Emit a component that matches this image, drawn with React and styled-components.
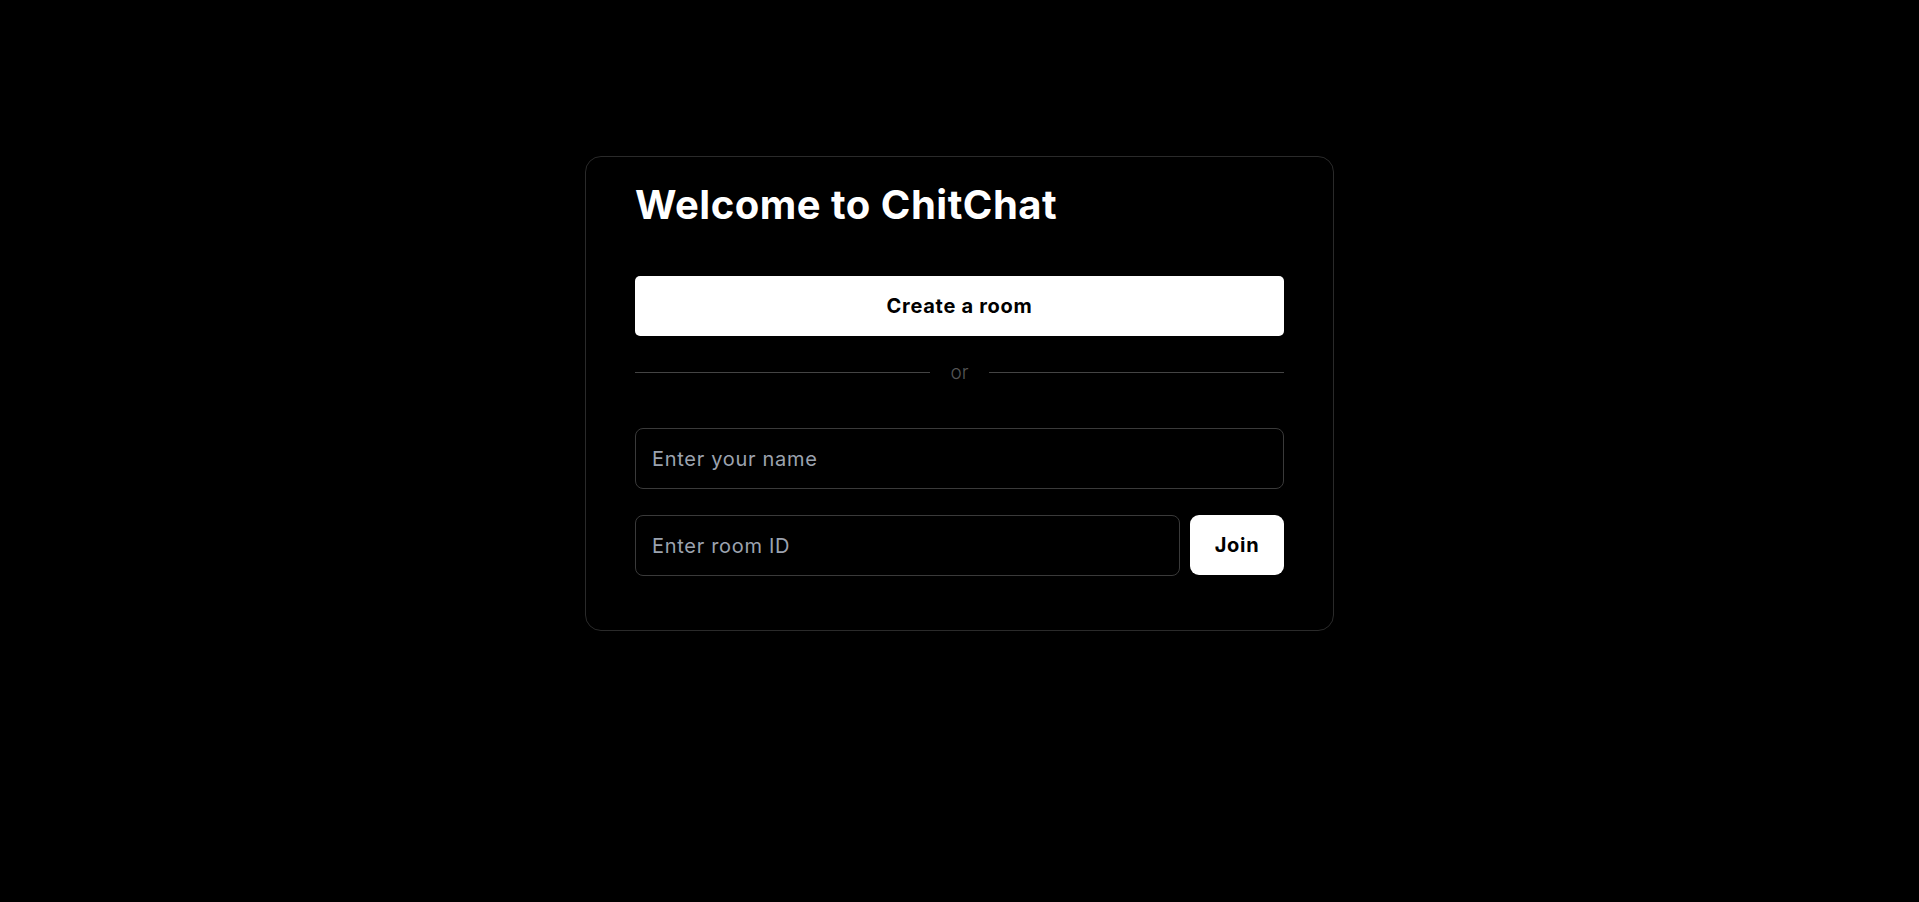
import React from 'react'
import styled, { createGlobalStyle } from 'styled-components'

const GlobalStyle = createGlobalStyle`
    html, body {
        margin: 0;
        background-color: #000;
        font-family: Inter, "Noto Sans", sans-serif;
    }
`

const Page = styled.div`
    min-height: 100vh;
    display: flex;
    justify-content: center;
    align-items: flex-start;
    padding-top: 156px;
    box-sizing: border-box;
`

const Card = styled.div`
    width: 749px;
    box-sizing: border-box;
    border: 1px solid #2a2a2a;
    border-radius: 16px;
    padding: 24px 49px 54px;
    display: flex;
    flex-direction: column;
`

const Title = styled.h1`
    margin: 0 0 47px;
    color: #fff;
    font-size: 40px;
    font-weight: 700;
    line-height: 48px;
    letter-spacing: 0.5px;
`

const PrimaryButton = styled.button`
    background-color: #fff;
    color: #000;
    border: none;
    height: 60px;
    width: ${props => props.$full ? '100%' : '94px'};
    flex-shrink: 0;
    font-family: inherit;
    font-size: 20px;
    font-weight: 700;
    letter-spacing: 0.7px;
    border-radius: ${props => props.$full ? '5px' : '9px'};
    cursor: pointer;
`

const Divider = styled.div`
    display: flex;
    align-items: center;
    gap: 20px;
    margin: 25px 0 44px;
    color: #555;
    font-size: 19px;
    font-weight: 300;

    &::before, &::after {
        content: "";
        flex: 1;
        height: 1px;
        background-color: #444;
    }
`

const Input = styled.input`
    flex: 1;
    min-width: 0;
    height: 61px;
    box-sizing: border-box;
    background-color: #000;
    border: 1px solid #3a3a3a;
    border-radius: 8px;
    padding: 0 16px;
    color: #fff;
    font-family: inherit;
    font-size: 20px;
    letter-spacing: 0.7px;
    outline: none;

    &::placeholder {
        color: #9ca3af;
    }
`

const Row = styled.div`
    display: flex;
    gap: 10px;
    margin-top: ${props => props.$spaced ? '26px' : '0'};
`

function App() {
    return (
        <>
            <GlobalStyle />
            <Page>
                <Card>
                    <Title>Welcome to ChitChat</Title>
                    <PrimaryButton $full>Create a room</PrimaryButton>
                    <Divider>or</Divider>
                    <Row>
                        <Input placeholder="Enter your name" />
                    </Row>
                    <Row $spaced>
                        <Input placeholder="Enter room ID" />
                        <PrimaryButton>Join</PrimaryButton>
                    </Row>
                </Card>
            </Page>
        </>
    )
}

export default App
